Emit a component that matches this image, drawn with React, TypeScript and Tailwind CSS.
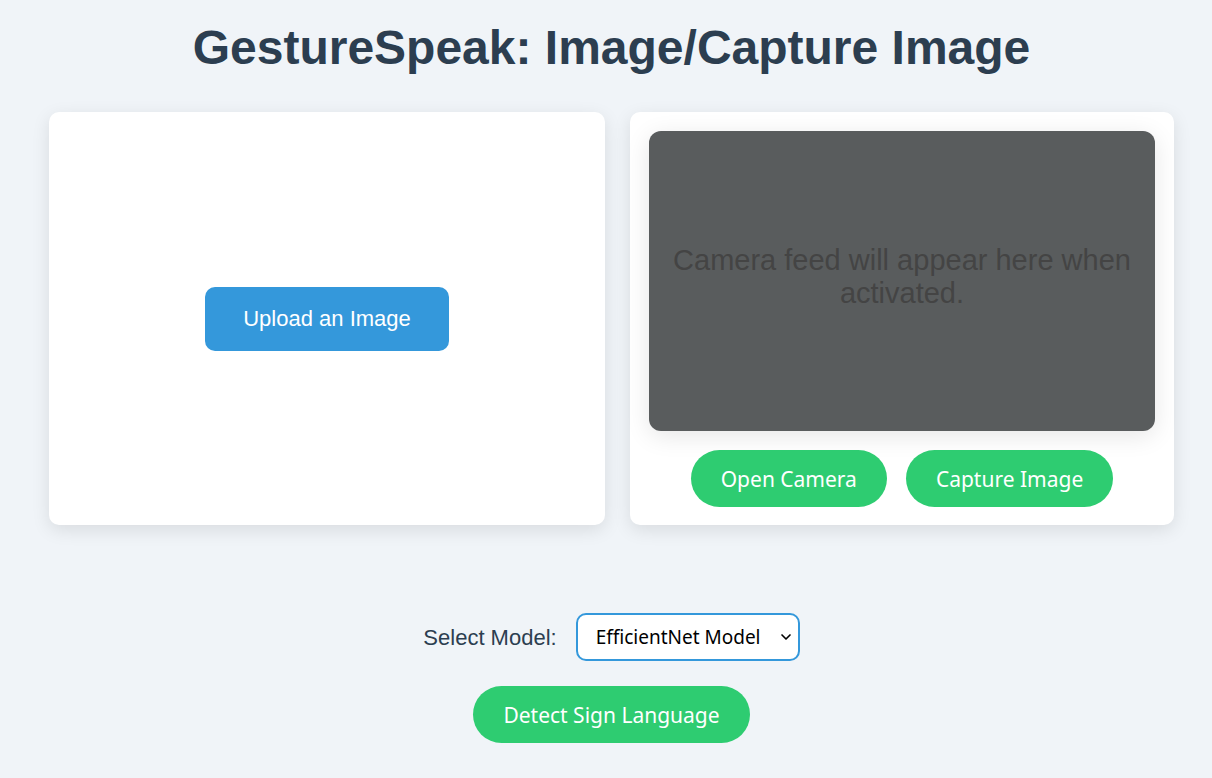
import { useState } from 'react';
import { ChevronDown } from 'lucide-react';

const pill =
  "h-[57px] cursor-pointer rounded-full bg-[#2ecc71] px-[30px] text-[21px] leading-7 text-white font-['Noto_Sans',sans-serif] hover:bg-[#27ae60]";

export default function App() {
  const [model, setModel] = useState('EfficientNet Model');

  return (
    <div className="min-h-screen bg-[#f0f4f8] pl-[11px] pb-8 pt-5 font-['Liberation_Sans',Arial,sans-serif] text-[#2c3e50]">
      <h1 className="text-center text-5xl leading-14 font-bold">GestureSpeak: Image/Capture Image</h1>

      <main className="mx-auto mt-9 flex max-w-[1125px] gap-[25px]">
        <section className="flex flex-1 items-center justify-center rounded-[10px] bg-white shadow-[0_5px_18px_rgba(0,0,0,0.1)]">
          <label className="flex h-16 cursor-pointer items-center rounded-[10px] bg-[#3498db] px-[38px] text-[22px] text-white">
            Upload an Image
            <input type="file" accept="image/*" className="sr-only" />
          </label>
        </section>

        <section className="flex w-[544px] flex-col gap-[19px] rounded-[10px] bg-white p-[19px] pb-[18px] shadow-[0_5px_18px_rgba(0,0,0,0.1)]">
          <div className="flex h-[300px] items-center justify-center rounded-xl bg-[#595c5d] px-5 shadow-[0_5px_25px_rgba(0,0,0,0.1)]">
            <p className="pb-2 text-center text-[29px] leading-[33px] text-[#444444]">
              Camera feed will appear here when activated.
            </p>
          </div>
          <div className="flex justify-center gap-[19px]">
            <button type="button" className={pill}>Open Camera</button>
            <button type="button" className={pill}>Capture Image</button>
          </div>
        </section>
      </main>

      <footer className="mt-[88px] flex flex-col items-center gap-[25px]">
        <div className="flex items-center gap-[19px]">
          <label htmlFor="model" className="text-[22px]">Select Model:</label>
          <div className="relative">
            <select
              id="model"
              value={model}
              onChange={(e) => setModel(e.target.value)}
              className="h-12 w-56 appearance-none rounded-[10px] border-2 border-[#3498db] bg-white pl-[18px] font-['Noto_Sans',sans-serif] text-[19px] text-black"
            >
              <option>EfficientNet Model</option>
            </select>
            <ChevronDown className="pointer-events-none absolute top-4 right-1.5 size-4 text-black" strokeWidth={2.5} />
          </div>
        </div>
        <button type="button" className={pill}>Detect Sign Language</button>
      </footer>
    </div>
  );
}
